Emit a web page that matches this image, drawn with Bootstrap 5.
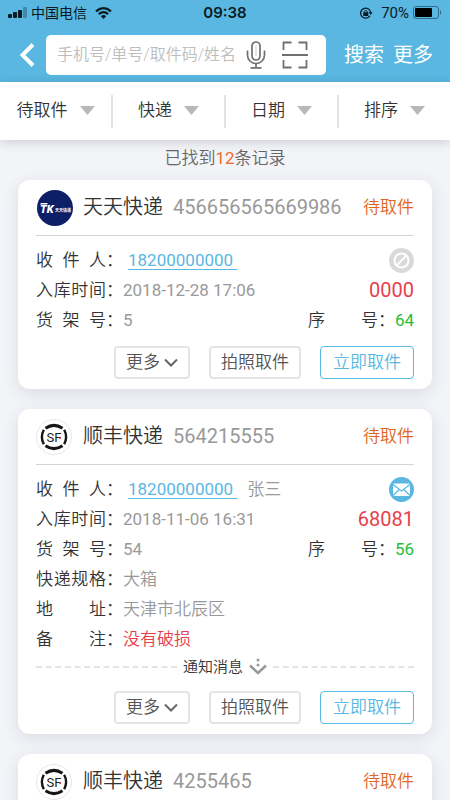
<!DOCTYPE html>
<html lang="zh-CN">
<head>
<meta charset="utf-8">
<meta name="viewport" content="width=device-width, initial-scale=1">
<title>快递记录</title>
<link href="https://cdn.jsdelivr.net/npm/bootstrap@5.3.0/dist/css/bootstrap.min.css" rel="stylesheet">
<style>
:root{--sky:#59b7e1;--ink:#333;--soft:#999}
body{font-family:Roboto,"Noto Sans CJK SC",sans-serif;font-size:17px;font-weight:350;line-height:30px;color:var(--ink);background:#f3f4f8}
button,input{font-family:inherit;font-weight:inherit}
svg{display:block;flex:none}
.top-area{background:var(--sky)}
.status-line{height:25px;font-size:14px;font-weight:400;line-height:24px;color:#0c1a22}
.status-line .clock{font-family:Inter,sans-serif;font-size:15px;font-weight:600}
.status-line .level{font-size:15px}
.search-line{padding:10px 17px 7px 20px}
.search-box{height:40px;min-width:0;margin-left:11px;border-radius:5px;padding:0 18px 0 11px}
.search-box input{font-size:16px;line-height:24px;min-width:0;width:100px;outline:0;color:var(--ink)}
.search-box input::placeholder{color:#bdbdbd;opacity:1}
.plain{border:0;background:none;padding:0;color:inherit}
.head-actions{gap:9px;margin-left:18px}
.head-action{font-size:20px;font-weight:400;color:#fff;white-space:nowrap}
.filters{height:58px;padding:13px 0 12px;box-shadow:0 2px 10px rgba(0,0,0,.16);z-index:1}
.filters .plain{gap:12px;line-height:30px;padding-bottom:3px}
.filters .plain + .plain{border-left:2px solid #e2e2e2}
.list{scrollbar-width:none;padding:0 18px}
.tally{padding:3px 0 7px;color:#666;line-height:30px}
.tally span{color:#f26a2c}
.parcel{border:0;border-radius:12px;padding:0 18px 10px;margin-bottom:20px;box-shadow:0 4px 16px rgba(60,65,90,.13)}
.parcel-head{height:56px;padding-bottom:2px;border-bottom:1px solid #d4d4d4;margin-bottom:9px}
.parcel-head svg{margin-top:2px}
.parcel-head h2{font-size:20px;font-weight:inherit;line-height:30px;margin:0 0 0 9px}
.parcel-head .track{font-size:20px;color:var(--soft);margin-left:10px}
.num,.track,.phone,.code,.seq,.tally span{font-weight:400}
.state{color:#e0651e}
.key{width:70px;text-align:justify;text-align-last:justify}
.val{color:var(--soft)}
.phone{color:var(--sky);margin-left:5px;white-space:pre;text-underline-offset:3px}
.person{margin-left:10px}
.code{font-size:20px;color:#e8404a}
.seq{color:#1fbe3c}
.warn{color:#e8404a}
.notice{height:26px;font-size:15px;line-height:26px;gap:6px}
.notice i{border-top:2px dashed #e4e4e4}
.acts{gap:19px;margin-top:11px}
.act{height:33px;line-height:29px;font-size:17px;padding:0 10px;border:2px solid #e4e4e4;border-radius:4px;background:#fff;color:#555;gap:4px}
.act-go{border:1px solid var(--sky);color:var(--sky);padding:0 12px}
</style>
<script src="https://cdn.jsdelivr.net/npm/bootstrap@5.3.0/dist/js/bootstrap.bundle.min.js"></script>
</head>
<body class="vh-100 d-flex flex-column overflow-hidden">
<svg width="0" height="0" class="position-absolute" aria-hidden="true">
  <symbol id="ring" viewBox="0 0 38 36">
    <circle cx="18" cy="18" r="17.500" fill="#fff" stroke="#e6e6e6"/>
    <g fill="none" stroke="#161616">
      <path d="M9.500 9.200Q18 3.500 26.500 9.200M9.500 26.800Q18 32.500 26.500 26.800" stroke-width="3"/>
      <path d="M7.800 10.800Q4 18 7.800 25.200M28.200 10.800Q32 18 28.200 25.200" stroke-width="2.400"/>
    </g>
  </symbol>
  <symbol id="down" viewBox="0 0 14 9"><path d="M1 1.500L7 7.500L13 1.500" fill="none" stroke="#666" stroke-width="2"/></symbol>
  <symbol id="caret" viewBox="0 0 15 9"><path d="M0 0H15L7.500 9Z" fill="#b8b8b8"/></symbol>
</svg>

<header class="top-area">
  <div class="status-line row g-0 align-items-center">
    <div class="col d-flex align-items-center ps-2">
      <svg width="19" height="11" viewBox="0 0 19 11"><g fill="#0c1a22"><rect y="7" width="4" height="4" rx="1"/><rect x="5" y="5" width="4" height="6" rx="1"/><rect x="10" y="3" width="4" height="8" rx="1"/><rect x="15" width="4" height="11" rx="1" opacity=".3"/></g></svg>
      <span class="ms-1">中国电信</span>
      <svg class="ms-2" width="17" height="12" viewBox="0 0 17 12"><g fill="none" stroke="#0c1a22" stroke-width="2.200"><path d="M1 4.300Q8.500-2 16 4.300"/><path d="M3.800 7.200Q8.500 3.200 13.200 7.200"/></g><path d="M5.800 9.200Q8.500 7 11.200 9.200L8.500 12Z" fill="#0c1a22"/></svg>
    </div>
    <div class="col-auto clock">09:38</div>
    <div class="col d-flex align-items-center justify-content-end pe-2">
      <svg width="14" height="12" viewBox="0 0 14 12"><path d="M10.800 8.900A5 5 0 1 1 11.600 5.500" fill="none" stroke="#0c1a22" stroke-width="1.300"/><path d="M9.700 5.300H13.600L11.700 8Z" fill="#0c1a22"/><rect x="4.300" y="5.300" width="5" height="3.600" rx=".5" fill="#0c1a22"/><path d="M5.300 5.500V4.500Q6.800 2.300 8.300 4.500V5.500" fill="none" stroke="#0c1a22"/></svg>
      <span class="level ms-2 me-1">70%</span>
      <svg width="29" height="13" viewBox="0 0 29 13"><rect x=".5" y=".5" width="25" height="12" rx="2.500" fill="none" stroke="#2f6e8a"/><rect x="2" y="2" width="17" height="9" rx="1" fill="#000"/><path d="M27 4Q29.500 6.500 27 9Z" fill="#2f6e8a"/></svg>
    </div>
  </div>
  <div class="search-line d-flex align-items-center">
    <button class="plain" aria-label="返回"><svg width="15" height="24" viewBox="0 0 15 24"><path d="M13 1.500L2.500 12L13 22.500" fill="none" stroke="#fff" stroke-width="4"/></svg></button>
    <form class="search-box bg-white flex-grow-1 d-flex align-items-center">
      <input class="plain flex-grow-1" type="text" aria-label="搜索" placeholder="手机号/单号/取件码/姓名">
      <button type="button" class="plain ms-1" aria-label="语音"><svg width="20" height="28" viewBox="0 0 20 28"><g fill="none" stroke="#707070" stroke-width="1.700"><rect x="6" y="1" width="8" height="18" rx="4"/><path d="M1.500 9.500V14A8.500 8.500 0 0 0 18.500 14V9.500M10 22.500V26.500M4.500 26.800H15.500"/><path d="M10 4.500V15" stroke="#ccc" stroke-width="1"/></g></svg></button>
      <button type="button" class="plain ms-3" aria-label="扫码"><svg width="26" height="28" viewBox="0 0 26 28"><path d="M9.500 1.500H1.500V9M16.500 1.500H24.500V9M1.500 19V26.500H9.500M24.500 19V26.500H16.500M0 14H26" fill="none" stroke="#707070" stroke-width="1.800"/></svg></button>
    </form>
    <div class="head-actions d-flex">
      <button class="plain head-action">搜索</button>
      <button class="plain head-action">更多</button>
    </div>
  </div>
</header>

<nav class="filters bg-white d-flex position-relative">
  <button class="plain col d-flex justify-content-center align-items-center">待取件<svg width="15" height="9"><use href="#caret"/></svg></button>
  <button class="plain col d-flex justify-content-center align-items-center">快递<svg width="15" height="9"><use href="#caret"/></svg></button>
  <button class="plain col d-flex justify-content-center align-items-center">日期<svg width="15" height="9"><use href="#caret"/></svg></button>
  <button class="plain col d-flex justify-content-center align-items-center">排序<svg width="15" height="9"><use href="#caret"/></svg></button>
</nav>

<main class="list flex-grow-1 overflow-auto">
  <p class="tally text-center mb-0">已找到<span>12</span>条记录</p>

  <article class="card parcel">
    <div class="parcel-head d-flex align-items-center">
      <svg width="38" height="36" viewBox="-1 0 38 36"><circle cx="18" cy="18" r="18" fill="#0d1f66"/><path d="M4 13H11L10 14.500H3Z" fill="#fff"/><text x="3" y="23" font-size="11" font-weight="900" font-style="italic" font-family="Roboto,sans-serif" fill="#fff">TK</text><text x="18" y="22" font-size="4" font-weight="700" fill="#fff">天天快递</text></svg>
      <h2>天天快递</h2><span class="track">456656565669986</span><span class="state ms-auto">待取件</span>
    </div>
    <div class="d-flex align-items-center"><span class="key">收件人</span>：<a class="phone" href="tel:18200000000">18200000000 </a>
      <svg class="ms-auto" width="25" height="25" viewBox="0 0 25 25"><circle cx="12.500" cy="12.500" r="12.500" fill="#d9d9d9"/><circle cx="12.500" cy="12.500" r="7" fill="none" stroke="#fff" stroke-width="2"/><path d="M7.500 17.500L17.500 7.500" stroke="#fff" stroke-width="2"/></svg></div>
    <div class="d-flex"><span class="key">入库时间</span>：<span class="val num">2018-12-28 17:06</span><span class="code ms-auto">0000</span></div>
    <div class="d-flex"><span class="key">货架号</span>：<span class="val num">5</span><span class="key ms-auto">序号</span>：<span class="seq">64</span></div>
    <div class="acts d-flex justify-content-end">
      <button class="act d-flex align-items-center">更多<svg width="14" height="9"><use href="#down"/></svg></button>
      <button class="act">拍照取件</button>
      <button class="act act-go">立即取件</button>
    </div>
  </article>

  <article class="card parcel">
    <div class="parcel-head d-flex align-items-center">
      <svg width="38" height="36"><use href="#ring"/><text x="18" y="23" font-size="13" font-weight="400" text-anchor="middle" fill="#222">SF</text><circle cx="24" cy="19" r="1" fill="#d92b2b"/></svg>
      <h2>顺丰快递</h2><span class="track">564215555</span><span class="state ms-auto">待取件</span>
    </div>
    <div class="d-flex align-items-center"><span class="key">收件人</span>：<a class="phone" href="tel:18200000000">18200000000 </a><span class="val person">张三</span>
      <svg class="ms-auto" width="25" height="25" viewBox="0 0 25 25"><circle cx="12.500" cy="12.500" r="12.500" fill="#59b7e1"/><rect x="4" y="6.500" width="17" height="12.500" rx="1" fill="#fff"/><path d="M4 7.500L12.500 14L21 7.500M4 18.500L10.300 12.500M21 18.500L14.700 12.500" fill="none" stroke="#59b7e1" stroke-width="1.200"/></svg></div>
    <div class="d-flex"><span class="key">入库时间</span>：<span class="val num">2018-11-06 16:31</span><span class="code ms-auto">68081</span></div>
    <div class="d-flex"><span class="key">货架号</span>：<span class="val num">54</span><span class="key ms-auto">序号</span>：<span class="seq">56</span></div>
    <div class="d-flex"><span class="key">快递规格</span>：<span class="val">大箱</span></div>
    <div class="d-flex"><span class="key">地址</span>：<span class="val">天津市北辰区</span></div>
    <div class="d-flex"><span class="key">备注</span>：<span class="warn">没有破损</span></div>
    <div class="notice d-flex align-items-center"><i class="flex-grow-1"></i><span>通知消息</span><svg width="18" height="18" viewBox="0 0 18 18"><path d="M1 7.500L9 15L17 7.500" fill="none" stroke="#999" stroke-width="2.600"/><circle cx="9" cy="2" r="1.500" fill="#999"/><circle cx="9" cy="7" r="1.500" fill="#999"/></svg><i class="flex-grow-1"></i></div>
    <div class="acts d-flex justify-content-end">
      <button class="act d-flex align-items-center">更多<svg width="14" height="9"><use href="#down"/></svg></button>
      <button class="act">拍照取件</button>
      <button class="act act-go">立即取件</button>
    </div>
  </article>

  <article class="card parcel">
    <div class="parcel-head d-flex align-items-center">
      <svg width="38" height="36"><use href="#ring"/><text x="18" y="23" font-size="13" font-weight="400" text-anchor="middle" fill="#222">SF</text><circle cx="24" cy="19" r="1" fill="#d92b2b"/></svg>
      <h2>顺丰快递</h2><span class="track">4255465</span><span class="state ms-auto">待取件</span>
    </div>
  </article>
</main>
</body>
</html>
